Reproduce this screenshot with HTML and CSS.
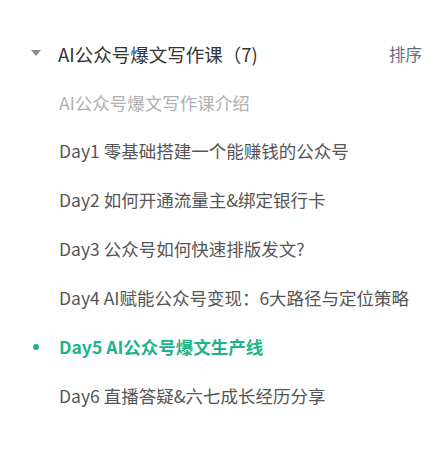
FILE: index.html
```html
<!DOCTYPE html>
<html lang="zh-CN">
<head>
<meta charset="utf-8">
<link rel="stylesheet" href="styles.css">
</head>
<body>
<div class="panel">
  <div class="header">
    <span class="caret"></span>
    <span class="title">AI公众号爆文写作课（7)</span>
    <span class="sort">排序</span>
  </div>
  <ul class="list">
    <li class="item intro">AI公众号爆文写作课介绍</li>
    <li class="item">Day1 零基础搭建一个能赚钱的公众号</li>
    <li class="item">Day2 如何开通流量主&amp;绑定银行卡</li>
    <li class="item">Day3 公众号如何快速排版发文?</li>
    <li class="item">Day4 AI赋能公众号变现：6大路径与定位策略</li>
    <li class="item active">Day5 AI公众号爆文生产线</li>
    <li class="item">Day6 直播答疑&amp;六七成长经历分享</li>
  </ul>
</div>
</body>
</html>
```

FILE: styles.css
```css
* { box-sizing: border-box; }
html, body { margin: 0; padding: 0; background: #fff; }
body {
  font-family: "Noto Sans CJK SC", "Noto Sans", sans-serif;
  color: #555;
}
.panel {
  width: 445px;
  padding: 30px 23px 0 31px;
}
.header {
  display: flex;
  align-items: center;
  height: 48px;
}
.caret {
  width: 0;
  height: 0;
  border-left: 5.5px solid transparent;
  border-right: 5.5px solid transparent;
  border-top: 6px solid #8a8a8a;
  margin-right: 17px;
  margin-top: -2px;
}
.title {
  font-size: 18.5px;
  color: #333;
  flex: 1;
}
.paren { letter-spacing: 0; }
.sort {
  font-size: 16.5px;
  color: #637080;
}
.list {
  list-style: none;
  margin: 0;
  padding: 0 0 0 28px;
}
.item {
  height: 49px;
  display: flex;
  align-items: center;
  font-size: 17.5px;
  color: #555;
  position: relative;
}
.intro { color: #b0b0b0; height: 48px; }
.active {
  color: #1db38c;
  font-weight: bold;
}
.active::before {
  content: "";
  position: absolute;
  left: -26px;
  top: 50%;
  width: 6px;
  height: 6px;
  margin-top: -3px;
  border-radius: 50%;
  background: #1db38c;
}
```
